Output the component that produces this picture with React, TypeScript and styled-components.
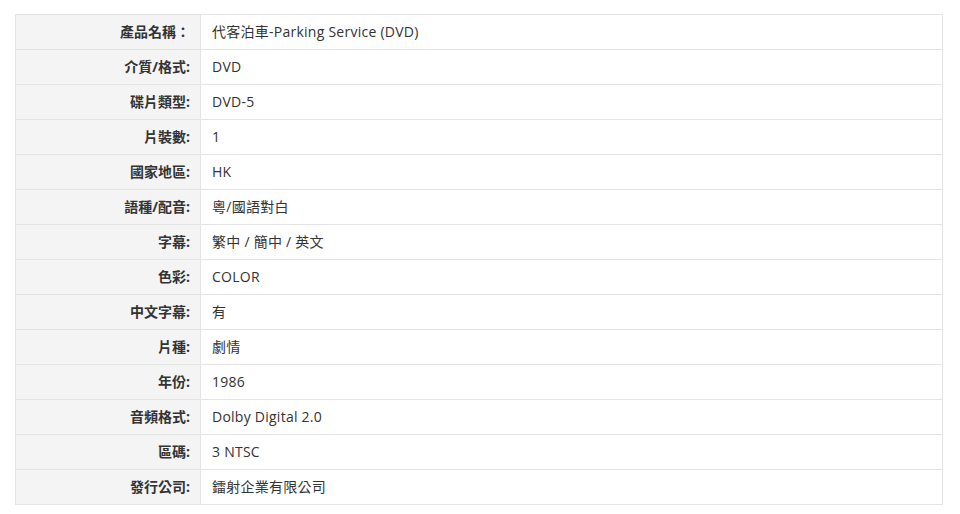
import React from "react";
import styled, { createGlobalStyle } from "styled-components";

const Global = createGlobalStyle`
  html, body { margin: 0; padding: 0; background: #fff; }
  body {
    font-family: "Segoe UI", "Open Sans", "Noto Sans", "Noto Sans CJK TC", sans-serif;
    color: #333;
  }
`;

const Page = styled.div`
  padding: 14px 17px 0 15px;
`;

const Table = styled.table`
  width: 928px;
  border-collapse: collapse;
  border: 1px solid #e4e4e4;
  font-size: 14px;
`;

const Row = styled.tr`
  height: 35px;
  border-bottom: 1px solid #e4e4e4;
`;

const Label = styled.th`
  width: 174px;
  background: #f4f4f4;
  border-right: 1px solid #e4e4e4;
  text-align: right;
  padding: 0 10px 2px 0;
  font-weight: 700;
  color: #333;
  white-space: nowrap;
`;

const Value = styled.td`
  padding: 0 0 2px 11px;
  text-align: left;
  color: #333;
  font-weight: 400;
  letter-spacing: 0.25px;
`;

const rows: [string, string][] = [
  ["產品名稱：", "代客泊車-Parking Service (DVD)"],
  ["介質/格式:", "DVD"],
  ["碟片類型:", "DVD-5"],
  ["片裝數:", "1"],
  ["國家地區:", "HK"],
  ["語種/配音:", "粵/國語對白"],
  ["字幕:", "繁中 / 簡中 / 英文"],
  ["色彩:", "COLOR"],
  ["中文字幕:", "有"],
  ["片種:", "劇情"],
  ["年份:", "1986"],
  ["音頻格式:", "Dolby Digital 2.0"],
  ["區碼:", "3 NTSC"],
  ["發行公司:", "鐳射企業有限公司"],
];

export default function App() {
  return (
    <Page>
      <Global />
      <Table>
        <tbody>
          {rows.map(([k, v]) => (
            <Row key={k}>
              <Label>{k}</Label>
              <Value>{v}</Value>
            </Row>
          ))}
        </tbody>
      </Table>
    </Page>
  );
}
